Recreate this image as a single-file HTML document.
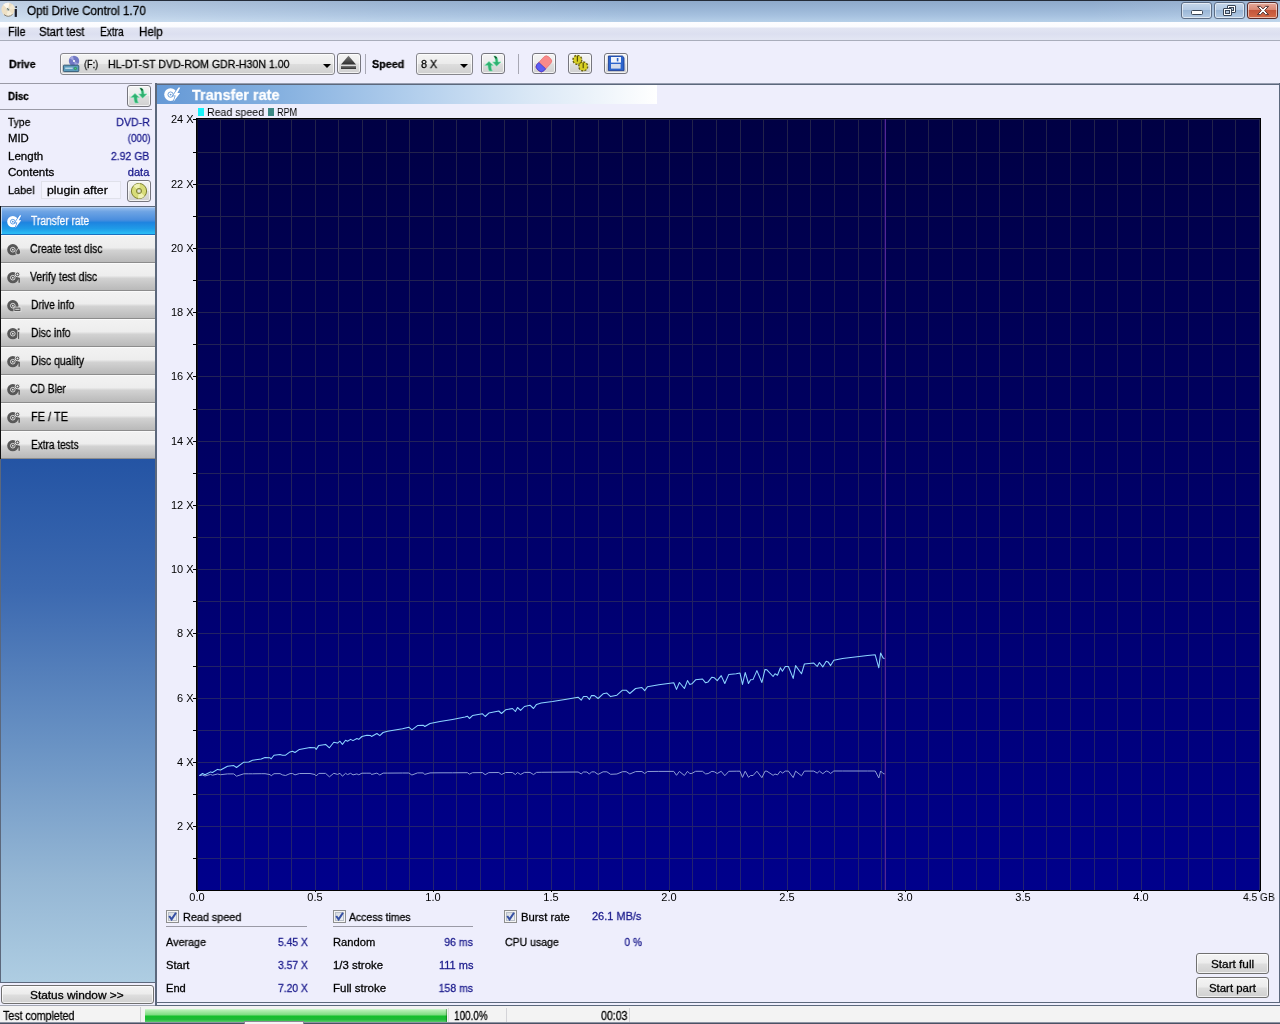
<!DOCTYPE html>
<html lang="en"><head><meta charset="utf-8"><title>Opti Drive Control 1.70</title>
<style>
*{box-sizing:border-box;margin:0;padding:0}
html,body{width:1280px;height:1024px;overflow:hidden;background:#eeeefc}
body{position:relative;font-family:"Liberation Sans",sans-serif;font-size:12px;color:#000;-webkit-font-smoothing:antialiased}
.abs{position:absolute}
.t{position:absolute;white-space:nowrap;line-height:14px;height:14px;will-change:transform;-webkit-text-stroke:.28px currentColor}
.t.ns{-webkit-text-stroke:0}
.ui{font-family:"Liberation Sans",sans-serif;font-size:12px}
.b{font-weight:bold}
.val{color:#1a1a8c}
#title{position:absolute;left:0;top:0;width:1280px;height:22px;background:linear-gradient(180deg,#8ea9cb 0%,#98b4d5 35%,#a6c1df 70%,#b6d0e9 100%);border-top:1px solid #232b38}
#title .gl{position:absolute;left:0;top:0;width:1280px;height:21px;background:linear-gradient(90deg,rgba(255,255,255,.42) 0%,rgba(255,255,255,.28) 10%,rgba(255,255,255,.1) 30%,rgba(255,255,255,0) 50%,rgba(255,255,255,0) 85%,rgba(255,255,255,.14) 100%)}
#menu{position:absolute;left:0;top:22px;width:1280px;height:19px;background:linear-gradient(180deg,#fdfdff 0,#fafbfe 5px,#e2e5f3 6px,#dcdff0 12px,#e2e5f3 17px);border-bottom:1px solid #a9adbb}
.combo{position:absolute;border:1px solid #86868c;border-radius:3px;background:linear-gradient(180deg,#f4f4f4 0%,#ebebeb 48%,#dddddd 52%,#cfcfcf 100%);box-shadow:inset 0 0 0 1px rgba(255,255,255,.7)}
.tbtn{position:absolute;border:1px solid #76767e;border-radius:3px;background:linear-gradient(180deg,#f4f4f4 0%,#ececec 48%,#dedede 52%,#d0d0d0 100%);box-shadow:inset 0 0 0 1px rgba(255,255,255,.7)}
.arrow{position:absolute;width:0;height:0;border-left:4px solid transparent;border-right:4px solid transparent;border-top:4px solid #000}
.hline{position:absolute;height:1px;background:#9a9aa6}
.nav{position:absolute;left:1px;width:154px;height:28px;background:linear-gradient(180deg,#f2f2f2 0%,#ededed 45%,#d2d2d2 55%,#b9b9b9 100%);border-top:1px solid #fafafa;border-bottom:1px solid #8c8c8c}
.nav.sel{background:linear-gradient(180deg,#94bbec 0%,#6ea4e4 14%,#4a8ede 46%,#1e84e0 56%,#1f9ce8 80%,#2cc0f6 100%);border-top:1px solid #b4d0f2;border-bottom:1px solid #1a70c0;box-shadow:inset 1px 0 0 rgba(255,255,255,.6)}
.wbtn{position:absolute;border:1px solid #5d6d85;border-radius:3px;background:linear-gradient(180deg,#c6d7ea 0%,#b3c9e3 45%,#9bb7d7 50%,#b4cbe4 100%);box-shadow:inset 0 0 0 1px rgba(255,255,255,.55)}
.chk{position:absolute;width:13px;height:13px;border:1px solid #8e8f8f;background:linear-gradient(135deg,#cfd4dc 0%,#f4f6f8 100%);box-shadow:inset 0 0 0 1px #f4f4f4,inset 0 0 0 2px #b8bec8}
</style></head>
<body>
<div id="title"><div class="gl"></div>
<svg class="abs" style="left:1px;top:0px" width="18" height="18" viewBox="0 0 18 18"><circle cx="7.1" cy="8.4" r="6.7" fill="#eee0c4"/><path d="M7.1 8.4 L2.2 3.8 A6.7 6.7 0 0 1 8.4 1.8Z" fill="#fbf7ee"/><path d="M7.1 8.4 L11.8 13.2 A6.7 6.7 0 0 1 5.4 14.9Z" fill="#f6eeda"/><path d="M7.1 8.4 L13.8 8 A6.7 6.7 0 0 0 11.4 3.2Z" fill="#f4ead4"/><path d="M3 13.6 A6.7 6.7 0 0 0 11.6 13.4" stroke="#7a7468" stroke-width=".9" fill="none"/><circle cx="7.1" cy="8.4" r="1.7" fill="#c8ccc8"/><path d="M6 7.4 L8 9.2" stroke="#4a5a4a" stroke-width=".9"/><rect x="13.7" y="8" width="2.2" height="7.9" fill="#1c1c28"/><rect x="14.4" y="5.2" width="1.5" height="1.7" fill="#1c1c28"/></svg>
<div class="wbtn" style="left:1181px;top:1px;width:31px;height:17px"><div class="abs" style="left:9px;top:7px;width:12px;height:5px;border:1px solid #3a4656;background:#fff;border-radius:1.5px"></div></div>
<div class="wbtn" style="left:1214px;top:1px;width:31px;height:17px">
<div class="abs" style="left:12px;top:2px;width:9px;height:8px;border:1px solid #3a4656;background:#fff;border-radius:1px"></div><div class="abs" style="left:14px;top:4px;width:5px;height:4px;border:1px solid #3a4656;background:#b4c8e0"></div>
<div class="abs" style="left:8px;top:5px;width:9px;height:8px;border:1px solid #3a4656;background:#fff;border-radius:1px"></div><div class="abs" style="left:10px;top:7px;width:5px;height:4px;border:1px solid #3a4656;background:#b4c8e0"></div></div>
<div class="wbtn" style="left:1247px;top:1px;width:31px;height:17px;border-color:#5a2a28;background:linear-gradient(180deg,#e4a99c 0%,#d88672 45%,#c4553a 50%,#d46b48 100%)">
<svg class="abs" style="left:8px;top:2px" width="14" height="11" viewBox="0 0 14 12" preserveAspectRatio="none"><path d="M1.5 1.5 L4.5 1.5 L7 4.2 L9.5 1.5 L12.5 1.5 L8.7 6 L12.5 10.5 L9.5 10.5 L7 7.8 L4.5 10.5 L1.5 10.5 L5.3 6Z" fill="#fff" stroke="#4a2a2a" stroke-width="1"/></svg></div>
</div>
<div class="t" style="top:4.0px;font-size:12px;line-height:14px;height:14px;left:26.9px;transform-origin:0 0;transform:scaleX(0.9725);">Opti Drive Control 1.70</div>
<div id="menu"></div>
<div class="t" style="top:25.2px;font-size:12px;line-height:14px;height:14px;left:7.5px;transform-origin:0 0;transform:scaleX(0.9047);">File</div><div class="t" style="top:25.2px;font-size:12px;line-height:14px;height:14px;left:39.4px;transform-origin:0 0;transform:scaleX(0.9452);">Start test</div><div class="t" style="top:25.2px;font-size:12px;line-height:14px;height:14px;left:99.7px;transform-origin:0 0;transform:scaleX(0.8460);">Extra</div><div class="t" style="top:25.2px;font-size:12px;line-height:14px;height:14px;left:138.8px;transform-origin:0 0;transform:scaleX(0.9620);">Help</div>
<!-- toolbar -->
<div class="t" style="top:58.3px;font-size:11px;line-height:13px;height:13px;font-weight:bold;left:8.6px;transform-origin:0 0;transform:scaleX(0.9662);">Drive</div>
<div class="combo" style="left:60px;top:53px;width:275px;height:22px"><svg class="abs" style="left:-1px;top:-1px" width="24" height="22" viewBox="0 0 24 22"><circle cx="14" cy="8" r="5.2" fill="#7078c4"/><path d="M14 8 L9.6 5.2 A5.2 5.2 0 0 1 13 2.9Z" fill="#a4a8e0"/><path d="M14 8 L18.4 10.8 A5.2 5.2 0 0 1 15 13.1Z" fill="#9ca0dc"/><circle cx="14" cy="8" r="1.1" fill="#fff"/><rect x="3.4" y="12.2" width="15.4" height="6.4" rx=".8" fill="#5c9cbc" stroke="#2c5470" stroke-width=".9"/><rect x="5.2" y="14.6" width="7.5" height="1.2" fill="#cfe6f2"/><circle cx="15.4" cy="15.5" r="1.2" fill="#48c878" stroke="#1c7844" stroke-width=".5"/></svg>
<div class="arrow" style="left:262px;top:10px"></div></div>
<div class="t" style="top:58.3px;font-size:11px;line-height:13px;height:13px;left:83.6px;transform-origin:0 0;transform:scaleX(0.8241);">(F:)</div><div class="t" style="top:58.3px;font-size:11px;line-height:13px;height:13px;left:107.5px;transform-origin:0 0;transform:scaleX(0.9620);">HL-DT-ST DVD-ROM GDR-H30N 1.00</div>
<div class="tbtn" style="left:337px;top:53px;width:24px;height:21px"><svg class="abs" style="left:-1px;top:-1px" width="24" height="21" viewBox="0 0 24 21"><defs><linearGradient id="ej" x1="0" y1="0" x2="0" y2="1"><stop offset="0" stop-color="#7a7a7a"/><stop offset="1" stop-color="#2c2c2c"/></linearGradient></defs><path d="M11.5 2.8 L19 11.6 L4 11.6Z" fill="url(#ej)"/><rect x="4" y="13" width="15" height="3" fill="url(#ej)"/></svg></div>
<div class="abs" style="left:365px;top:54px;width:1px;height:20px;background:#a8a8b4"></div>
<div class="t" style="top:58.3px;font-size:11px;line-height:13px;height:13px;font-weight:bold;left:372.2px;transform-origin:0 0;transform:scaleX(0.9783);">Speed</div>
<div class="combo" style="left:416px;top:53px;width:57px;height:22px"><div class="arrow" style="left:43px;top:10px"></div></div>
<div class="t" style="top:58.3px;font-size:11px;line-height:13px;height:13px;left:420.5px;transform-origin:0 0;transform:scaleX(0.9688);">8 X</div>
<div class="tbtn" style="left:481px;top:53px;width:24px;height:21px"><svg class="abs" style="left:-1px;top:-1px" width="24" height="22" viewBox="0 0 24 22"><path d="M8 8.4 L12.3 12.5 L10.2 12.5 C10 14.2 10.4 16 11.4 18 L8.2 18 C7.2 16 6.9 14.2 7 12.5 L3.7 12.5Z" fill="#30b070" stroke="#7ce8b4" stroke-width=".6"/><path d="M12.8 2.9 C15.6 2.9 17 4.6 17 8.9 L20 8.9 L15.6 13.2 L11.6 8.9 L14.3 8.9 C14.3 6 14 4.2 12.8 2.9Z" fill="#30b070" stroke="#7ce8b4" stroke-width=".6"/><path d="M12.8 2.9 C14.6 2.9 15.6 3.6 16.2 5.2 L14.2 5.6 C13.9 4.4 13.5 3.6 12.8 2.9Z" fill="#14582c"/></svg></div>
<div class="abs" style="left:518px;top:54px;width:1px;height:20px;background:#a8a8b4"></div>
<div class="tbtn" style="left:532px;top:53px;width:24px;height:21px"><svg class="abs" style="left:-1px;top:-1px" width="24" height="21" viewBox="0 0 24 21"><g transform="rotate(-47 11.8 10.8)"><rect x="3.2" y="6.2" width="17" height="9.4" rx="3.4" fill="#f88a8a" stroke="#e87070" stroke-width=".7"/><path d="M6.6 6.2 A3.4 4.7 0 0 0 6.6 15.6 L9.4 15.6 L9.4 6.2Z" fill="#5c5cf4" stroke="#3838c8" stroke-width=".7"/></g></svg></div>
<div class="tbtn" style="left:568px;top:53px;width:24px;height:21px"><svg class="abs" style="left:-1px;top:-1px" width="24" height="21" viewBox="0 0 24 21"><circle cx="9.4" cy="6.8" r="4.3" fill="#d8d024" stroke="#6c6410" stroke-width="1.7" stroke-dasharray="2 1.3"/><circle cx="9.4" cy="6.8" r="3.6" fill="#d8d024"/><circle cx="15.2" cy="13.4" r="4.3" fill="#d8d024" stroke="#6c6410" stroke-width="1.7" stroke-dasharray="2 1.3"/><circle cx="15.2" cy="13.4" r="3.6" fill="#d8d024"/><rect x="8.8" y="3" width="1.2" height="5.6" fill="#585008"/><rect x="14.6" y="9.8" width="1.2" height="5.4" fill="#585008"/></svg></div>
<div class="tbtn" style="left:604px;top:53px;width:24px;height:21px"><svg class="abs" style="left:-1px;top:-1px" width="24" height="21" viewBox="0 0 24 21"><path d="M4.4 3 L18.4 3 L20 4.6 L20 17.6 L4.4 17.6Z" fill="#2c64cc" stroke="#1c3c94" stroke-width=".9"/><rect x="7" y="4" width="10" height="5.6" fill="#f0f4fc"/><rect x="12.8" y="5" width="1.6" height="3.4" fill="#2c64cc"/><rect x="7" y="11" width="9.6" height="4.6" fill="#d4dcec"/></svg></div>
<!-- left panel -->
<div class="hline" style="left:0;top:83px;width:152px;background:#9a9aa6"></div>
<div class="t" style="top:90.1px;font-size:11px;line-height:13px;height:13px;font-weight:bold;left:8.1px;transform-origin:0 0;transform:scaleX(0.8946);">Disc</div>
<div class="tbtn" style="left:127px;top:85px;width:24px;height:22px"><svg class="abs" style="left:-1px;top:-1px" width="24" height="22" viewBox="0 0 24 22"><path d="M8 8.4 L12.3 12.5 L10.2 12.5 C10 14.2 10.4 16 11.4 18 L8.2 18 C7.2 16 6.9 14.2 7 12.5 L3.7 12.5Z" fill="#30b070" stroke="#7ce8b4" stroke-width=".6"/><path d="M12.8 2.9 C15.6 2.9 17 4.6 17 8.9 L20 8.9 L15.6 13.2 L11.6 8.9 L14.3 8.9 C14.3 6 14 4.2 12.8 2.9Z" fill="#30b070" stroke="#7ce8b4" stroke-width=".6"/><path d="M12.8 2.9 C14.6 2.9 15.6 3.6 16.2 5.2 L14.2 5.6 C13.9 4.4 13.5 3.6 12.8 2.9Z" fill="#14582c"/></svg></div>
<div class="hline" style="left:0;top:109px;width:152px;background:#9a9aa6"></div>
<div class="t" style="top:115.9px;font-size:11px;line-height:13px;height:13px;left:8.1px;transform-origin:0 0;transform:scaleX(0.9388);">Type</div><div class="t" style="top:115.9px;font-size:11px;line-height:13px;height:13px;color:#1a1a8c;right:1130.0px;transform-origin:100% 0;transform:scaleX(0.9643);">DVD-R</div>
<div class="t" style="top:132.3px;font-size:11px;line-height:13px;height:13px;left:8.1px;transform-origin:0 0;transform:scaleX(1.0311);">MID</div><div class="t" style="top:132.3px;font-size:11px;line-height:13px;height:13px;color:#1a1a8c;right:1129.7px;transform-origin:100% 0;transform:scaleX(0.8954);">(000)</div>
<div class="t" style="top:149.5px;font-size:11px;line-height:13px;height:13px;left:8.1px;transform-origin:0 0;transform:scaleX(1.0488);">Length</div><div class="t" style="top:149.5px;font-size:11px;line-height:13px;height:13px;color:#1a1a8c;right:1130.3px;transform-origin:100% 0;transform:scaleX(0.9527);">2.92 GB</div>
<div class="t" style="top:165.6px;font-size:11px;line-height:13px;height:13px;left:8.1px;transform-origin:0 0;transform:scaleX(1.0515);">Contents</div><div class="t" style="top:165.6px;font-size:11px;line-height:13px;height:13px;color:#1a1a8c;right:1130.5px;transform-origin:100% 0;transform:scaleX(1.0130);">data</div>
<div class="t" style="top:184.4px;font-size:11px;line-height:13px;height:13px;left:8.1px;transform-origin:0 0;transform:scaleX(0.9880);">Label</div>
<div class="abs" style="left:41px;top:181px;width:80px;height:18px;border:1px solid #e0e1ea;background:#f3f3fd"></div>
<div class="t" style="top:184.4px;font-size:11px;line-height:13px;height:13px;left:47.3px;transform-origin:0 0;transform:scaleX(1.1169);">plugin after</div>
<div class="tbtn" style="left:127px;top:180px;width:24px;height:22px"><svg class="abs" style="left:2px;top:1px" width="18" height="18" viewBox="0 0 18 18"><circle cx="9" cy="9" r="7.6" fill="#d8dc78" stroke="#7c8030" stroke-width="1"/><path d="M9 9 L3.5 4 A7.6 7.6 0 0 1 10 1.5Z" fill="#f0f2b4"/><path d="M9 9 L14.5 14 A7.6 7.6 0 0 1 8 16.5Z" fill="#f0f2b4"/><circle cx="9" cy="9" r="2.6" fill="#c8c8a0" stroke="#7c8030" stroke-width=".9"/><circle cx="9" cy="9" r="1" fill="#eee"/></svg></div>
<div class="abs" style="left:0;top:206px;width:155px;height:777px;background:#5c687c"></div>
<div class="abs" style="left:0;top:206px;width:1px;height:253px;background:#101010"></div>
<div class="abs" style="left:1px;top:459px;width:154px;height:523px;background:linear-gradient(180deg,#2454a4 0%,#3c69b0 25%,#6a93c4 55%,#94b6d4 80%,#aecde2 100%)"></div>
<div class="nav sel" style="top:207px"><div class="abs" style="left:6px;top:7px"><svg width="15" height="13.2" viewBox="0 0 16 14" style="display:block"><circle cx="6.2" cy="7.1" r="6" fill="#fff"/><circle cx="6.2" cy="7.1" r="2.5" fill="none" stroke="#4a8fe0" stroke-width=".9"/><circle cx="6.2" cy="7.1" r=".9" fill="#4a8fe0"/><path d="M13.6 .3 L8.6 8 L11 8 L8.8 14 L15.2 5.6 L12.6 5.6 L15.4 .3Z" fill="#fff" stroke="#3a86e0" stroke-width="1.3" paint-order="stroke"/></svg></div></div>
<div class="t" style="top:213.6px;font-size:12px;line-height:14px;height:14px;color:#fff;left:31.2px;transform-origin:0 0;transform:scaleX(0.8520);">Transfer rate</div>
<div class="nav" style="top:235px"><div class="abs" style="left:6px;top:7px"><svg width="15" height="13.2" viewBox="0 0 16 14" style="display:block"><circle cx="6.2" cy="7.1" r="6" fill="#585858"/><circle cx="6.2" cy="7.1" r="2.5" fill="none" stroke="#ececec" stroke-width=".9"/><circle cx="6.2" cy="7.1" r=".9" fill="#ececec"/><path d="M12.4 5.2 C14.6 8 14.8 9.6 14.2 11 C13.6 12.6 11.2 13 10 11.8 C8.8 10.6 9.4 8.6 12.4 5.2Z" fill="#585858" stroke="#ececec" stroke-width=".8"/></svg></div></div><div class="t" style="top:241.6px;font-size:12px;line-height:14px;height:14px;left:29.7px;transform-origin:0 0;transform:scaleX(0.8708);">Create test disc</div>
<div class="nav" style="top:263px"><div class="abs" style="left:6px;top:7px"><svg width="15" height="13.2" viewBox="0 0 16 14" style="display:block"><circle cx="6.2" cy="7.1" r="6" fill="#585858"/><circle cx="6.2" cy="7.1" r="2.5" fill="none" stroke="#ececec" stroke-width=".9"/><circle cx="6.2" cy="7.1" r=".9" fill="#ececec"/><circle cx="11.2" cy="3.6" r="2.5" fill="#585858" stroke="#ececec" stroke-width="1"/><circle cx="11.2" cy="3.6" r="1" fill="#ececec"/><path d="M9.4 8 L13 8 L13 12.4" stroke="#585858" stroke-width="1.5" fill="none"/></svg></div></div><div class="t" style="top:269.6px;font-size:12px;line-height:14px;height:14px;left:30.0px;transform-origin:0 0;transform:scaleX(0.8685);">Verify test disc</div>
<div class="nav" style="top:291px"><div class="abs" style="left:6px;top:7px"><svg width="15" height="13.2" viewBox="0 0 16 14" style="display:block"><circle cx="6.2" cy="7.1" r="6" fill="#585858"/><circle cx="6.2" cy="7.1" r="2.5" fill="none" stroke="#ececec" stroke-width=".9"/><circle cx="6.2" cy="7.1" r=".9" fill="#ececec"/><rect x="7.4" y="8.6" width="7.4" height="4.6" fill="#585858" stroke="#ececec" stroke-width=".8"/><rect x="8.8" y="10.4" width="4.6" height="1" fill="#ececec"/></svg></div></div><div class="t" style="top:297.6px;font-size:12px;line-height:14px;height:14px;left:30.5px;transform-origin:0 0;transform:scaleX(0.8533);">Drive info</div>
<div class="nav" style="top:319px"><div class="abs" style="left:6px;top:7px"><svg width="15" height="13.2" viewBox="0 0 16 14" style="display:block"><circle cx="6.2" cy="7.1" r="6" fill="#585858"/><circle cx="6.2" cy="7.1" r="2.5" fill="none" stroke="#ececec" stroke-width=".9"/><circle cx="6.2" cy="7.1" r=".9" fill="#ececec"/><rect x="11.4" y="5" width="2" height="8" fill="#585858" stroke="#ececec" stroke-width=".6"/><rect x="11.4" y="1.4" width="2" height="2" fill="#585858"/></svg></div></div><div class="t" style="top:325.6px;font-size:12px;line-height:14px;height:14px;left:30.5px;transform-origin:0 0;transform:scaleX(0.8584);">Disc info</div>
<div class="nav" style="top:347px"><div class="abs" style="left:6px;top:7px"><svg width="15" height="13.2" viewBox="0 0 16 14" style="display:block"><circle cx="6.2" cy="7.1" r="6" fill="#585858"/><circle cx="6.2" cy="7.1" r="2.5" fill="none" stroke="#ececec" stroke-width=".9"/><circle cx="6.2" cy="7.1" r=".9" fill="#ececec"/><circle cx="11.2" cy="3.6" r="2.5" fill="#585858" stroke="#ececec" stroke-width="1"/><circle cx="11.2" cy="3.6" r="1" fill="#ececec"/><path d="M9.4 8 L13 8 L13 12.4" stroke="#585858" stroke-width="1.5" fill="none"/></svg></div></div><div class="t" style="top:353.6px;font-size:12px;line-height:14px;height:14px;left:30.5px;transform-origin:0 0;transform:scaleX(0.8654);">Disc quality</div>
<div class="nav" style="top:375px"><div class="abs" style="left:6px;top:7px"><svg width="15" height="13.2" viewBox="0 0 16 14" style="display:block"><circle cx="6.2" cy="7.1" r="6" fill="#585858"/><circle cx="6.2" cy="7.1" r="2.5" fill="none" stroke="#ececec" stroke-width=".9"/><circle cx="6.2" cy="7.1" r=".9" fill="#ececec"/><circle cx="11.2" cy="3.6" r="2.5" fill="#585858" stroke="#ececec" stroke-width="1"/><circle cx="11.2" cy="3.6" r="1" fill="#ececec"/><path d="M9.4 8 L13 8 L13 12.4" stroke="#585858" stroke-width="1.5" fill="none"/></svg></div></div><div class="t" style="top:381.6px;font-size:12px;line-height:14px;height:14px;left:29.7px;transform-origin:0 0;transform:scaleX(0.8544);">CD Bler</div>
<div class="nav" style="top:403px"><div class="abs" style="left:6px;top:7px"><svg width="15" height="13.2" viewBox="0 0 16 14" style="display:block"><circle cx="6.2" cy="7.1" r="6" fill="#585858"/><circle cx="6.2" cy="7.1" r="2.5" fill="none" stroke="#ececec" stroke-width=".9"/><circle cx="6.2" cy="7.1" r=".9" fill="#ececec"/><circle cx="11.2" cy="3.6" r="2.5" fill="#585858" stroke="#ececec" stroke-width="1"/><circle cx="11.2" cy="3.6" r="1" fill="#ececec"/><path d="M9.4 8 L13 8 L13 12.4" stroke="#585858" stroke-width="1.5" fill="none"/></svg></div></div><div class="t" style="top:409.6px;font-size:12px;line-height:14px;height:14px;left:30.5px;transform-origin:0 0;transform:scaleX(0.9146);">FE / TE</div>
<div class="nav" style="top:431px"><div class="abs" style="left:6px;top:7px"><svg width="15" height="13.2" viewBox="0 0 16 14" style="display:block"><circle cx="6.2" cy="7.1" r="6" fill="#585858"/><circle cx="6.2" cy="7.1" r="2.5" fill="none" stroke="#ececec" stroke-width=".9"/><circle cx="6.2" cy="7.1" r=".9" fill="#ececec"/><circle cx="11.2" cy="3.6" r="2.5" fill="#585858" stroke="#ececec" stroke-width="1"/><circle cx="11.2" cy="3.6" r="1" fill="#ececec"/><path d="M9.4 8 L13 8 L13 12.4" stroke="#585858" stroke-width="1.5" fill="none"/></svg></div></div><div class="t" style="top:437.6px;font-size:12px;line-height:14px;height:14px;left:30.5px;transform-origin:0 0;transform:scaleX(0.8397);">Extra tests</div>

<div class="tbtn" style="left:1px;top:985px;width:153px;height:19px;border-color:#707070"></div>
<div class="t" style="top:989.0px;font-size:11px;line-height:13px;height:13px;left:29.7px;transform-origin:0 0;transform:scaleX(1.0789);">Status window &gt;&gt;</div>
<!-- right panel frame -->
<div class="abs" style="left:155px;top:83px;width:1125px;height:920px;border:2px solid #5c687c;border-bottom-width:1px;border-right-width:1px;background:#eeeefc"></div>
<div class="abs" style="left:155px;top:1003px;width:2px;height:3px;background:#5c687c"></div>
<div class="abs" style="left:157px;top:83px;width:1122px;height:1px;background:rgba(238,238,252,.4)"></div>
<div class="abs" style="left:157px;top:85px;width:500px;height:19px;background:linear-gradient(90deg,#6599d6 0%,#86b1e0 25%,#b0cdec 50%,#dae8f6 75%,#ffffff 100%)"></div>
<div class="abs" style="left:164px;top:87px"><svg width="17" height="15" viewBox="0 0 16 14" style="display:block"><circle cx="6.2" cy="7.1" r="6" fill="#fff"/><circle cx="6.2" cy="7.1" r="2.5" fill="none" stroke="#6599d6" stroke-width=".9"/><circle cx="6.2" cy="7.1" r=".9" fill="#6599d6"/><path d="M13.6 .3 L8.6 8 L11 8 L8.8 14 L15.2 5.6 L12.6 5.6 L15.4 .3Z" fill="#fff" stroke="#6599d6" stroke-width="1.3" paint-order="stroke"/></svg></div>
<div class="t" style="top:86.1px;font-size:15px;line-height:17px;height:17px;font-weight:bold;color:#fff;left:191.5px;transform-origin:0 0;transform:scaleX(0.9627);">Transfer rate</div>
<!-- legend -->
<div class="abs" style="left:198px;top:108px;width:6px;height:8px;background:#18f0f8"></div>
<div class="abs" style="left:268px;top:108px;width:6px;height:8px;background:#3c8884"></div>
<svg class="abs" style="left:0;top:0" width="1280" height="1024" viewBox="0 0 1280 1024">
<defs><linearGradient id="bg" x1="0" y1="0" x2="0" y2="1"><stop offset="0" stop-color="#000044"/><stop offset="1" stop-color="#00008c"/></linearGradient></defs>
<rect x="196" y="118" width="1065" height="773" fill="url(#bg)"/>
<path d="M220.5 118V891M244.5 118V891M268.5 118V891M291.5 118V891M315.5 118V891M338.5 118V891M362.5 118V891M386.5 118V891M409.5 118V891M433.5 118V891M456.5 118V891M480.5 118V891M504.5 118V891M527.5 118V891M551.5 118V891M574.5 118V891M598.5 118V891M622.5 118V891M645.5 118V891M669.5 118V891M692.5 118V891M716.5 118V891M740.5 118V891M763.5 118V891M787.5 118V891M810.5 118V891M834.5 118V891M858.5 118V891M881.5 118V891M905.5 118V891M928.5 118V891M952.5 118V891M976.5 118V891M999.5 118V891M1023.5 118V891M1046.5 118V891M1070.5 118V891M1094.5 118V891M1117.5 118V891M1141.5 118V891M1164.5 118V891M1188.5 118V891M1212.5 118V891M1235.5 118V891M196 858.5H1261M196 826.5H1261M196 794.5H1261M196 762.5H1261M196 730.5H1261M196 698.5H1261M196 666.5H1261M196 633.5H1261M196 601.5H1261M196 569.5H1261M196 537.5H1261M196 505.5H1261M196 473.5H1261M196 441.5H1261M196 409.5H1261M196 376.5H1261M196 344.5H1261M196 312.5H1261M196 280.5H1261M196 248.5H1261M196 216.5H1261M196 184.5H1261M196 152.5H1261M197.5 118V891M196 119.5H1261M1259.5 118V891" stroke="#4c4c50" stroke-opacity=".45" stroke-width="1" fill="none" shape-rendering="crispEdges"/>
<path d="M199.4 775.5 L202.5 775.1 L205.0 776.0 L210.6 774.4 L212.5 775.2 L217.5 774.0 L220.6 774.7 L227.5 773.9 L233.8 773.9 L236.5 776.2 L243.8 773.8 L248.8 773.8 L252.5 773.8 L261.2 773.7 L265.0 773.7 L270.0 774.6 L271.2 775.7 L274.0 773.7 L280.0 773.6 L282.5 774.9 L285.6 775.5 L290.0 773.6 L292.5 773.5 L295.0 774.9 L299.4 773.5 L310.0 773.5 L315.0 774.5 L316.2 776.0 L318.8 773.4 L325.6 773.4 L329.4 776.8 L333.8 773.3 L337.5 774.4 L340.0 773.3 L342.4 776.2 L345.6 773.3 L347.5 774.6 L350.6 773.3 L353.0 774.9 L356.9 773.9 L358.8 774.8 L361.9 773.2 L366.9 773.2 L370.6 773.2 L371.5 774.5 L376.9 773.1 L379.8 775.0 L383.1 773.1 L387.5 773.1 L402.5 773.0 L408.8 773.0 L411.9 775.0 L417.5 772.9 L423.1 772.9 L424.8 774.4 L430.0 772.9 L440.0 772.8 L452.5 772.8 L465.0 772.7 L467.5 772.7 L469.4 774.2 L472.5 772.7 L482.5 772.6 L485.2 774.7 L488.8 772.6 L498.8 772.5 L501.5 774.5 L505.6 772.5 L512.5 772.5 L515.4 774.6 L517.5 772.5 L520.6 774.5 L524.4 772.4 L530.0 772.4 L533.5 774.6 L536.5 772.4 L541.2 772.3 L552.5 772.2 L565.0 772.1 L578.1 772.0 L581.2 773.9 L583.5 772.0 L586.9 772.0 L589.4 774.1 L591.5 771.9 L594.4 771.9 L598.1 774.4 L603.1 771.8 L606.9 771.8 L610.6 774.3 L616.9 774.0 L622.5 771.7 L626.2 771.7 L629.8 774.0 L635.6 771.6 L641.9 771.5 L644.7 773.5 L647.5 771.5 L658.8 771.4 L673.8 771.4 L676.5 775.3 L679.4 771.4 L684.4 775.5 L687.5 771.3 L689.8 773.6 L691.9 773.4 L695.6 771.3 L702.5 771.3 L705.6 773.9 L708.1 773.6 L711.9 771.3 L714.4 771.8 L717.2 773.5 L721.2 771.3 L724.8 775.7 L728.8 771.3 L736.2 771.2 L740.0 771.2 L742.5 777.4 L745.2 771.2 L748.5 777.3 L750.6 775.5 L753.1 775.5 L756.9 771.2 L761.9 777.7 L765.0 771.2 L766.9 771.2 L773.1 775.3 L775.0 774.0 L777.5 774.9 L780.4 771.1 L782.4 773.2 L785.3 771.1 L788.4 771.1 L793.2 777.6 L795.6 771.1 L801.5 775.8 L804.4 771.1 L813.8 771.1 L817.2 773.1 L819.4 771.1 L822.8 773.7 L826.2 771.0 L828.1 771.5 L830.6 773.5 L833.8 771.0 L842.5 771.0 L855.0 771.0 L867.5 771.0 L875.2 771.0 L878.8 778.0 L880.6 771.0 L883.1 773.5 L885.0 774.0" stroke="#8c9cd4" stroke-width="1" fill="none" stroke-linejoin="round"/>
<path d="M199.4 775.6 L202.5 773.5 L205.0 774.8 L210.6 771.9 L212.5 772.5 L217.5 769.4 L220.6 770.0 L227.5 766.2 L233.8 765.6 L236.5 767.5 L243.8 762.2 L248.8 761.9 L252.5 760.2 L261.2 759.0 L265.0 757.5 L270.0 757.8 L271.2 758.8 L274.0 755.2 L280.0 754.4 L282.5 755.2 L285.6 755.2 L290.0 751.9 L292.5 751.2 L295.0 752.5 L299.4 749.4 L310.0 747.5 L315.0 747.8 L316.2 749.4 L318.8 745.4 L325.6 744.4 L329.4 747.8 L333.8 742.2 L337.5 743.1 L340.0 741.2 L342.4 744.4 L345.6 740.3 L347.5 741.2 L350.6 739.4 L353.0 740.6 L356.9 738.5 L358.8 739.4 L361.9 736.5 L366.9 735.2 L370.6 735.6 L371.5 736.5 L376.9 733.5 L379.8 735.6 L383.1 732.5 L387.5 731.2 L402.5 728.8 L408.8 727.2 L411.9 729.8 L417.5 725.6 L423.1 725.2 L424.8 726.5 L430.0 723.5 L440.0 721.5 L452.5 719.4 L465.0 717.1 L467.5 716.2 L469.4 718.5 L472.5 715.6 L482.5 713.8 L485.2 716.5 L488.8 713.1 L498.8 711.0 L501.5 713.5 L505.6 709.8 L512.5 708.5 L515.4 711.5 L517.5 707.5 L520.6 710.4 L524.4 706.5 L530.0 705.2 L533.5 708.5 L536.5 704.4 L541.2 703.1 L552.5 701.5 L565.0 699.4 L578.1 697.2 L581.2 700.2 L583.5 696.5 L586.9 696.5 L589.4 699.4 L591.5 695.6 L594.4 695.6 L598.1 698.5 L603.1 693.8 L606.9 693.1 L610.6 696.6 L616.9 695.2 L622.5 690.2 L626.2 690.2 L629.8 693.5 L635.6 688.5 L641.9 687.5 L644.7 690.6 L647.5 686.7 L658.8 684.8 L673.8 682.8 L676.5 689.4 L679.4 682.5 L684.4 688.5 L687.5 680.6 L689.8 684.4 L691.9 683.8 L695.6 679.8 L702.5 679.0 L705.6 682.8 L708.1 681.9 L711.9 677.2 L714.4 677.8 L717.2 680.6 L721.2 675.6 L724.8 683.5 L728.8 674.4 L736.2 673.8 L740.0 673.1 L742.5 684.4 L745.2 672.5 L748.5 683.5 L750.6 679.8 L753.1 679.4 L756.9 670.6 L761.9 682.5 L765.0 669.4 L766.9 669.8 L773.1 676.5 L775.0 673.8 L777.5 675.2 L780.4 667.8 L782.4 671.2 L785.3 666.5 L788.4 666.5 L793.2 678.4 L795.6 665.6 L801.5 673.8 L804.4 664.0 L813.8 663.1 L817.2 666.5 L819.4 662.5 L822.8 666.9 L826.2 661.2 L828.1 661.9 L830.6 665.6 L833.8 660.2 L842.5 658.5 L855.0 656.9 L867.5 655.4 L875.2 654.8 L878.8 667.8 L880.6 653.1 L883.1 658.1 L885.0 658.8" stroke="#8cd4ff" stroke-width="1.05" fill="none" stroke-linejoin="round"/>
<rect x="884" y="118" width="1" height="773" fill="#3c1478" fill-opacity=".45" shape-rendering="crispEdges"/><rect x="885" y="118" width="1" height="773" fill="#522896" shape-rendering="crispEdges"/>
<path d="M196.5 118V891M196 118.5H1261M1260.5 118V891M196 890.5H1261" stroke="#000" stroke-width="1" fill="none" shape-rendering="crispEdges"/>
<path d="M197.5 118V891" stroke="#000" stroke-opacity=".55" stroke-width="1" fill="none" shape-rendering="crispEdges"/>
<path d="M197.5 891V892M315.5 891V892M433.5 891V892M551.5 891V892M669.5 891V892M787.5 891V892M905.5 891V892M1023.5 891V892M1141.5 891V892M1259.5 891V892" stroke="#000" stroke-width="1" shape-rendering="crispEdges"/>
<path d="M193 858.5H196M193 826.5H196M193 794.5H196M193 762.5H196M193 730.5H196M193 698.5H196M193 666.5H196M193 633.5H196M193 601.5H196M193 569.5H196M193 537.5H196M193 505.5H196M193 473.5H196M193 441.5H196M193 409.5H196M193 376.5H196M193 344.5H196M193 312.5H196M193 280.5H196M193 248.5H196M193 216.5H196M193 184.5H196M193 152.5H196M193 119.5H196" stroke="#000" stroke-width="1" shape-rendering="crispEdges"/>
</svg>
<div class="t ns" style="right:1086.3px;top:819.7px;font-size:11px;line-height:13px;height:13px">2 X</div>
<div class="t ns" style="right:1086.3px;top:755.7px;font-size:11px;line-height:13px;height:13px">4 X</div>
<div class="t ns" style="right:1086.3px;top:691.7px;font-size:11px;line-height:13px;height:13px">6 X</div>
<div class="t ns" style="right:1086.3px;top:626.7px;font-size:11px;line-height:13px;height:13px">8 X</div>
<div class="t ns" style="right:1086.3px;top:562.7px;font-size:11px;line-height:13px;height:13px">10 X</div>
<div class="t ns" style="right:1086.3px;top:498.7px;font-size:11px;line-height:13px;height:13px">12 X</div>
<div class="t ns" style="right:1086.3px;top:434.7px;font-size:11px;line-height:13px;height:13px">14 X</div>
<div class="t ns" style="right:1086.3px;top:369.7px;font-size:11px;line-height:13px;height:13px">16 X</div>
<div class="t ns" style="right:1086.3px;top:305.7px;font-size:11px;line-height:13px;height:13px">18 X</div>
<div class="t ns" style="right:1086.3px;top:241.7px;font-size:11px;line-height:13px;height:13px">20 X</div>
<div class="t ns" style="right:1086.3px;top:177.7px;font-size:11px;line-height:13px;height:13px">22 X</div>
<div class="t ns" style="right:1086.3px;top:112.7px;font-size:11px;line-height:13px;height:13px">24 X</div>
<div class="t ns" style="left:176.9px;width:40px;text-align:center;top:890.6px;font-size:11px;line-height:13px;height:13px">0.0</div>
<div class="t ns" style="left:294.9px;width:40px;text-align:center;top:890.6px;font-size:11px;line-height:13px;height:13px">0.5</div>
<div class="t ns" style="left:412.9px;width:40px;text-align:center;top:890.6px;font-size:11px;line-height:13px;height:13px">1.0</div>
<div class="t ns" style="left:530.9px;width:40px;text-align:center;top:890.6px;font-size:11px;line-height:13px;height:13px">1.5</div>
<div class="t ns" style="left:648.9px;width:40px;text-align:center;top:890.6px;font-size:11px;line-height:13px;height:13px">2.0</div>
<div class="t ns" style="left:766.9px;width:40px;text-align:center;top:890.6px;font-size:11px;line-height:13px;height:13px">2.5</div>
<div class="t ns" style="left:884.9px;width:40px;text-align:center;top:890.6px;font-size:11px;line-height:13px;height:13px">3.0</div>
<div class="t ns" style="left:1002.9px;width:40px;text-align:center;top:890.6px;font-size:11px;line-height:13px;height:13px">3.5</div>
<div class="t ns" style="left:1120.9px;width:40px;text-align:center;top:890.6px;font-size:11px;line-height:13px;height:13px">4.0</div>
<div class="t ns" style="top:891.0px;font-size:11px;line-height:13px;height:13px;left:1242.7px;transform-origin:0 0;transform:scaleX(0.9255);">4.5 GB</div>
<div class="t ns" style="top:106.2px;font-size:11px;line-height:13px;height:13px;left:207.2px;transform-origin:0 0;transform:scaleX(0.9624);">Read speed</div>
<div class="t ns" style="top:106.2px;font-size:11px;line-height:13px;height:13px;left:277.3px;transform-origin:0 0;transform:scaleX(0.8220);">RPM</div>
<!-- bottom stats -->
<div class="chk" style="left:166px;top:910px"><svg class="abs" style="left:1px;top:1px" width="9" height="9" viewBox="0 0 9 9"><path d="M1.2 4 L3.6 7.4 L8 0.8" fill="none" stroke="#3650a4" stroke-width="2"/></svg></div><div class="t" style="top:910.6px;font-size:11px;line-height:13px;height:13px;left:182.8px;transform-origin:0 0;transform:scaleX(0.9852);">Read speed</div>
<div class="hline" style="left:166px;top:926px;width:141px"></div>
<div class="t" style="top:935.8px;font-size:11px;line-height:13px;height:13px;left:166.2px;transform-origin:0 0;transform:scaleX(0.9808);">Average</div><div class="t" style="top:935.8px;font-size:11px;line-height:13px;height:13px;color:#1a1a8c;right:972.2px;transform-origin:100% 0;transform:scaleX(0.9367);">5.45 X</div>
<div class="t" style="top:959.3px;font-size:11px;line-height:13px;height:13px;left:166.2px;transform-origin:0 0;transform:scaleX(1.0093);">Start</div><div class="t" style="top:959.3px;font-size:11px;line-height:13px;height:13px;color:#1a1a8c;right:972.2px;transform-origin:100% 0;transform:scaleX(0.9367);">3.57 X</div>
<div class="t" style="top:982.1px;font-size:11px;line-height:13px;height:13px;left:166.2px;transform-origin:0 0;transform:scaleX(1.0088);">End</div><div class="t" style="top:982.1px;font-size:11px;line-height:13px;height:13px;color:#1a1a8c;right:972.2px;transform-origin:100% 0;transform:scaleX(0.9367);">7.20 X</div>
<div class="chk" style="left:333px;top:910px"><svg class="abs" style="left:1px;top:1px" width="9" height="9" viewBox="0 0 9 9"><path d="M1.2 4 L3.6 7.4 L8 0.8" fill="none" stroke="#3650a4" stroke-width="2"/></svg></div><div class="t" style="top:910.6px;font-size:11px;line-height:13px;height:13px;left:349.4px;transform-origin:0 0;transform:scaleX(0.9507);">Access times</div>
<div class="hline" style="left:333px;top:926px;width:140px"></div>
<div class="t" style="top:935.8px;font-size:11px;line-height:13px;height:13px;left:333.4px;transform-origin:0 0;transform:scaleX(1.0150);">Random</div><div class="t" style="top:935.8px;font-size:11px;line-height:13px;height:13px;color:#1a1a8c;right:806.6px;transform-origin:100% 0;transform:scaleX(0.9577);">96 ms</div>
<div class="t" style="top:959.3px;font-size:11px;line-height:13px;height:13px;left:333.4px;transform-origin:0 0;transform:scaleX(1.0349);">1/3 stroke</div><div class="t" style="top:959.3px;font-size:11px;line-height:13px;height:13px;color:#1a1a8c;right:806.6px;transform-origin:100% 0;">111 ms</div>
<div class="t" style="top:982.1px;font-size:11px;line-height:13px;height:13px;left:333.4px;transform-origin:0 0;transform:scaleX(1.0463);">Full stroke</div><div class="t" style="top:982.1px;font-size:11px;line-height:13px;height:13px;color:#1a1a8c;right:806.6px;transform-origin:100% 0;transform:scaleX(0.9535);">158 ms</div>
<div class="chk" style="left:504px;top:910px"><svg class="abs" style="left:1px;top:1px" width="9" height="9" viewBox="0 0 9 9"><path d="M1.2 4 L3.6 7.4 L8 0.8" fill="none" stroke="#3650a4" stroke-width="2"/></svg></div><div class="t" style="top:910.6px;font-size:11px;line-height:13px;height:13px;left:520.6px;transform-origin:0 0;transform:scaleX(1.0233);">Burst rate</div>
<div class="t" style="top:910.2px;font-size:11px;line-height:13px;height:13px;color:#1a1a8c;left:592.2px;transform-origin:0 0;transform:scaleX(0.9953);">26.1 MB/s</div>
<div class="t" style="top:935.8px;font-size:11px;line-height:13px;height:13px;left:504.7px;transform-origin:0 0;transform:scaleX(0.9544);">CPU usage</div><div class="t" style="top:935.8px;font-size:11px;line-height:13px;height:13px;color:#1a1a8c;right:638.5px;transform-origin:100% 0;transform:scaleX(0.9226);">0 %</div>
<div class="tbtn" style="left:1196px;top:953px;width:73px;height:21px;border-color:#707070"></div><div class="t" style="top:958.3px;font-size:11px;line-height:13px;height:13px;left:1210.6px;transform-origin:0 0;transform:scaleX(1.0691);">Start full</div>
<div class="tbtn" style="left:1196px;top:977px;width:73px;height:21px;border-color:#707070"></div><div class="t" style="top:981.7px;font-size:11px;line-height:13px;height:13px;left:1208.8px;transform-origin:0 0;transform:scaleX(1.0354);">Start part</div>
<!-- status bar -->
<div class="abs" style="left:0;top:1005px;width:1280px;height:19px;background:#f3f3f3;border-top:1px solid #a4a8b4"></div>
<div class="abs" style="left:155px;top:1005px;width:1125px;height:1px;background:#5c687c"></div>
<div class="t" style="top:1009.2px;font-size:12px;line-height:14px;height:14px;left:2.5px;transform-origin:0 0;transform:scaleX(0.8858);">Test completed</div>
<div class="abs" style="left:140px;top:1007px;width:1px;height:15px;background:#d0d0d4"></div>
<div class="abs" style="left:145px;top:1009px;width:302px;height:13px;background:linear-gradient(180deg,#d4f8d4 0%,#b0eeb0 12%,#7cdc80 46%,#14c02c 54%,#1fba38 80%,#58cc68 100%);box-shadow:inset -2px 0 1px -1px rgba(0,80,0,.45)"></div>
<div class="abs" style="left:448px;top:1008px;width:1px;height:14px;background:#dcdcdc"></div>
<div class="t" style="top:1009.2px;font-size:12px;line-height:14px;height:14px;left:453.8px;transform-origin:0 0;transform:scaleX(0.8292);">100.0%</div>
<div class="abs" style="left:506px;top:1008px;width:1px;height:16px;background:#d4d4d8"></div>
<div class="t" style="top:1009.2px;font-size:12px;line-height:14px;height:14px;left:601.0px;transform-origin:0 0;transform:scaleX(0.8824);">00:03</div>
<div class="abs" style="left:629px;top:1008px;width:1px;height:16px;background:#d4d4d8"></div>
<div class="abs" style="left:0;top:1022px;width:1280px;height:2px;background:linear-gradient(180deg,#8e94a4 0,#8e94a4 1px,#4a5264 1px)"></div>
<div class="abs" style="left:244px;top:1021px;width:60px;height:3px;background:#f4f4f4;border:1px solid #8a8a94;border-bottom:0"></div>

</body></html>
